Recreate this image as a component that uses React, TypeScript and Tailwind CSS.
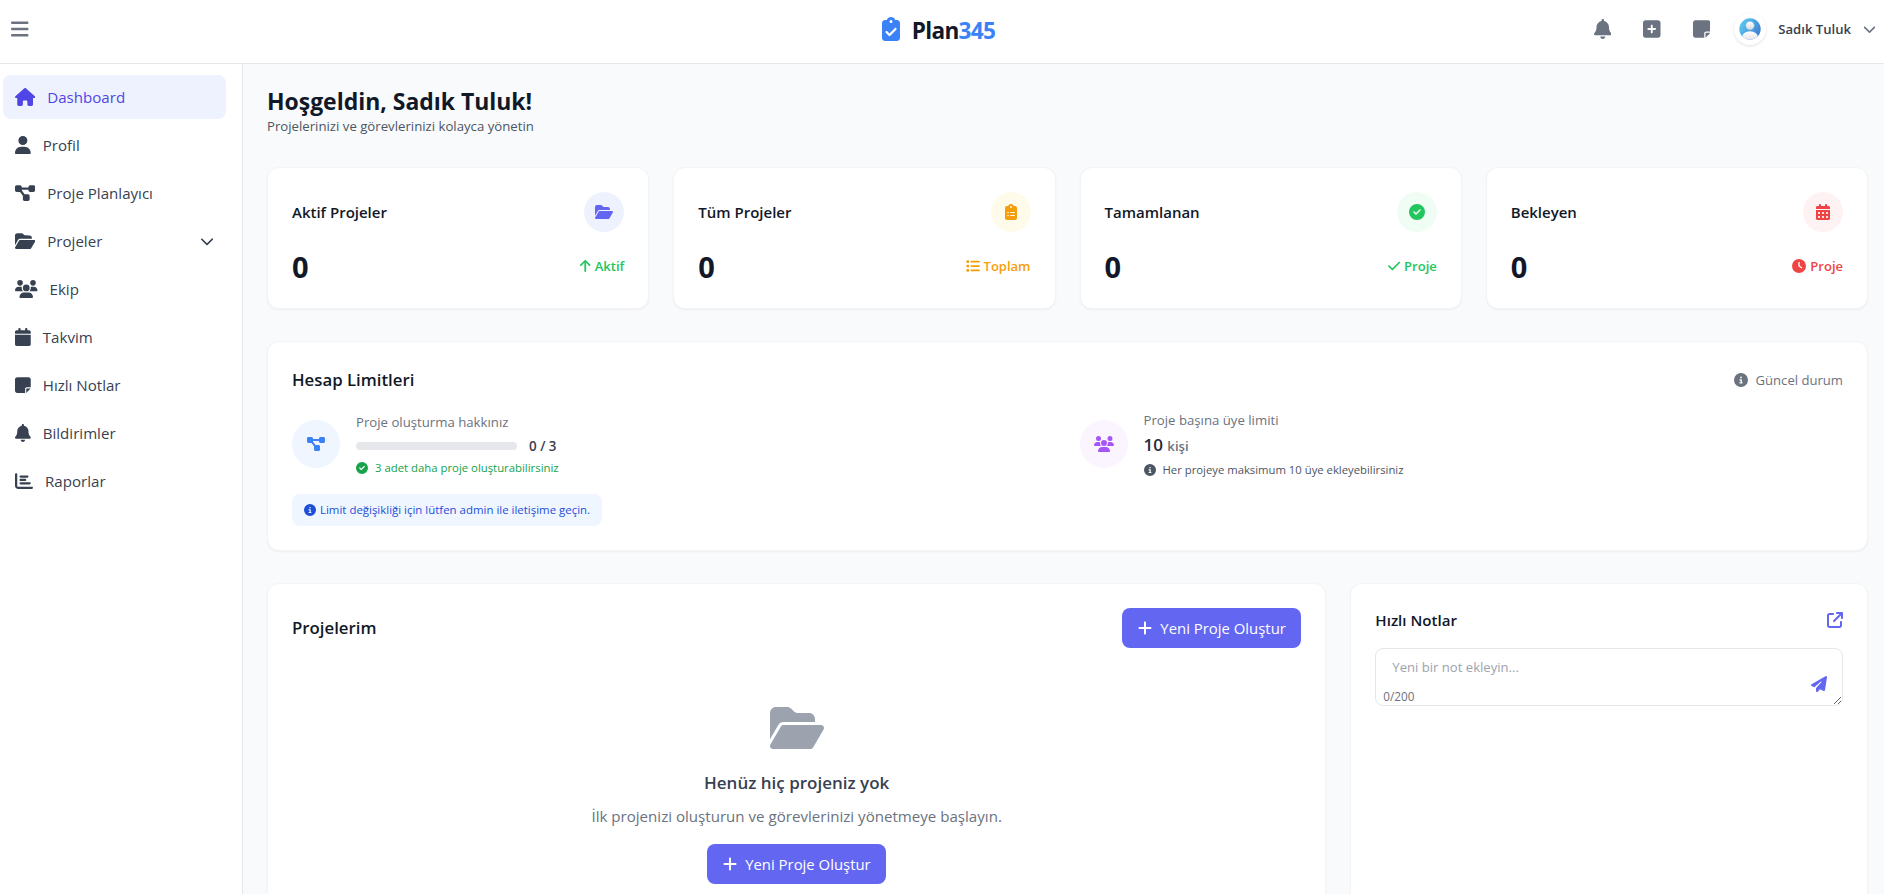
import type { ReactNode } from "react";
import type { IconType } from "react-icons";
import {
  FaArrowUp,
  FaArrowUpRightFromSquare,
  FaBars,
  FaBell,
  FaCalendar,
  FaCalendarDays,
  FaChartBar,
  FaCheck,
  FaChevronDown,
  FaCircleCheck,
  FaCircleInfo,
  FaClipboardList,
  FaClock,
  FaDiagramProject,
  FaFolderOpen,
  FaHouse,
  FaList,
  FaNoteSticky,
  FaPaperPlane,
  FaPlus,
  FaSquarePlus,
  FaUser,
  FaUsers,
} from "react-icons/fa6";

type NavItem = { label: string; icon: IconType; size: string; active?: boolean; expandable?: boolean };

const NAV: NavItem[] = [
  { label: "Dashboard", icon: FaHouse, size: "w-[20.25px] h-[18px]", active: true },
  { label: "Profil", icon: FaUser, size: "w-[15.75px] h-[18px]" },
  { label: "Proje Planlayıcı", icon: FaDiagramProject, size: "w-[20.25px] h-[18px]" },
  { label: "Projeler", icon: FaFolderOpen, size: "w-[20.25px] h-[18px]", expandable: true },
  { label: "Ekip", icon: FaUsers, size: "w-[22.5px] h-[18px]" },
  { label: "Takvim", icon: FaCalendar, size: "w-[15.75px] h-[18px]" },
  { label: "Hızlı Notlar", icon: FaNoteSticky, size: "w-[15.75px] h-[18px]" },
  { label: "Bildirimler", icon: FaBell, size: "w-[15.75px] h-[18px]" },
  { label: "Raporlar", icon: FaChartBar, size: "w-[18px] h-[18px]" },
];

type Stat = {
  title: string;
  value: number;
  icon: IconType;
  iconSize: string;
  circle: string;
  note: string;
  noteIcon: IconType;
  noteSize: string;
  noteColor: string;
};

const STATS: Stat[] = [
  {
    title: "Aktif Projeler", value: 0, icon: FaFolderOpen, iconSize: "w-[18px] h-4",
    circle: "bg-[#eef2ff] text-[#6366f1]",
    note: "Aktif", noteIcon: FaArrowUp, noteSize: "w-[10.5px] h-3.5", noteColor: "text-[#22c55e]",
  },
  {
    title: "Tüm Projeler", value: 0, icon: FaClipboardList, iconSize: "w-3 h-4",
    circle: "bg-[#fffbeb] text-[#f59e0b]",
    note: "Toplam", noteIcon: FaList, noteSize: "w-3.5 h-3.5", noteColor: "text-[#f59e0b]",
  },
  {
    title: "Tamamlanan", value: 0, icon: FaCircleCheck, iconSize: "w-4 h-4",
    circle: "bg-[#f0fdf4] text-[#22c55e]",
    note: "Proje", noteIcon: FaCheck, noteSize: "w-[12.25px] h-3.5", noteColor: "text-[#22c55e]",
  },
  {
    title: "Bekleyen", value: 0, icon: FaCalendarDays, iconSize: "w-3.5 h-4",
    circle: "bg-[#fef2f2] text-[#ef4444]",
    note: "Proje", noteIcon: FaClock, noteSize: "w-3.5 h-3.5", noteColor: "text-[#ef4444]",
  },
];

function Card({ className = "", children }: { className?: string; children: ReactNode }) {
  return (
    <div className={`rounded-xl border border-[#f3f4f6] bg-white p-6 shadow-[0_1px_2px_0_rgba(0,0,0,0.05)] ${className}`}>
      {children}
    </div>
  );
}

function ClipboardCheck() {
  return (
    <svg viewBox="0 0 384 512" className="h-6 w-[18px] text-[#3b82f6]" fill="currentColor">
      <path
        fillRule="evenodd"
        d="M192 0c-41.8 0-77.4 26.7-90.5 64H64C28.7 64 0 92.7 0 128v320c0 35.3 28.7 64 64 64h256c35.3 0 64-28.7 64-64V128c0-35.3-28.7-64-64-64h-37.5C269.4 26.7 233.8 0 192 0zm0 64a32 32 0 1 1 0 64 32 32 0 1 1 0-64zM305 273L177 401c-9.4 9.4-24.6 9.4-33.9 0L79 337c-9.4-9.4-9.4-24.6 0-33.9s24.6-9.4 33.9 0l47 47L271 239c9.4-9.4 24.6-9.4 33.9 0s9.4 24.6 0 33.9z"
      />
    </svg>
  );
}

function Avatar() {
  return (
    <div className="flex h-8 w-8 items-center justify-center rounded-full bg-white shadow-[0_1px_3px_0_rgba(0,0,0,0.12)]">
      <svg viewBox="0 0 22 22" className="h-[22px] w-[22px]">
        <defs>
          <linearGradient id="sky" x1="0" y1="0.2" x2="1" y2="0.8">
            <stop offset="0" stopColor="#5ccdf2" />
            <stop offset="1" stopColor="#3f78d2" />
          </linearGradient>
          <linearGradient id="body" x1="0" y1="0" x2="0" y2="1">
            <stop offset="0" stopColor="#ffffff" />
            <stop offset="1" stopColor="#d9d9dc" />
          </linearGradient>
          <clipPath id="disc">
            <circle cx="11" cy="11" r="10.7" />
          </clipPath>
        </defs>
        <g clipPath="url(#disc)">
          <rect width="22" height="22" fill="url(#sky)" />
          <ellipse cx="11" cy="19.5" rx="8" ry="6.2" fill="url(#body)" />
          <circle cx="11" cy="7.6" r="4.4" fill="url(#body)" stroke="#4fa9e0" strokeWidth="0.5" />
        </g>
      </svg>
    </div>
  );
}

function Header() {
  return (
    <header className="grid h-16 shrink-0 grid-cols-3 items-center border-b border-[#e5e7eb] bg-white pr-[8px] pl-[11px]">
      <div className="pb-1.5">
        <FaBars className="h-5 w-[17.5px] text-[#6b7280]" />
      </div>
      <div className="flex items-center justify-center gap-3 pr-2.5 pb-1.5">
        <ClipboardCheck />
        <span className="pt-1 text-[22.6px] leading-8 font-bold tracking-[-0.03em] text-[#111827]">
          Plan<span className="text-[#3b82f6]">345</span>
        </span>
      </div>
      <div className="flex items-center justify-end pb-1.5 text-[#6b7280]">
        <FaBell className="mr-8 h-5 w-[17.5px]" />
        <FaSquarePlus className="mr-8 h-5 w-[17.5px]" />
        <FaNoteSticky className="mr-6 h-5 w-[17.5px]" />
        <Avatar />
        <span className="mr-3 ml-3 text-[13.1px] leading-5 font-semibold text-[#374151]">Sadık Tuluk</span>
        <FaChevronDown className="h-3.5 w-[13px]" />
      </div>
    </header>
  );
}

function Sidebar() {
  return (
    <aside className="w-[243px] shrink-0 border-r border-[#e5e7eb] bg-white pt-[11px] pr-4 pl-[3px]">
      <nav className="flex flex-col gap-1">
        {NAV.map(({ label, icon: Icon, size, active, expandable }) => (
          <a
            key={label}
            className={`flex h-11 items-center rounded-lg px-3 ${active ? "bg-[#eef2ff] text-[#4f46e5]" : "text-[#374151]"}`}
          >
            <Icon className={`mr-3 ${size}`} />
            <span className="flex-1 text-[15.1px] leading-6">{label}</span>
            {expandable && <FaChevronDown className="h-3.5 w-3.5" />}
          </a>
        ))}
      </nav>
    </aside>
  );
}

function StatCard({ s }: { s: Stat }) {
  const Icon = s.icon;
  const NoteIcon = s.noteIcon;
  return (
    <Card>
      <div className="mb-4 flex items-center justify-between">
        <h3 className="text-[15px] leading-6 font-semibold text-[#111827]">{s.title}</h3>
        <div className={`flex h-10 w-10 items-center justify-center rounded-full ${s.circle}`}>
          <Icon className={s.iconSize} />
        </div>
      </div>
      <div className="flex items-center justify-between">
        <p className="pt-px text-[29px] leading-[35px] font-bold text-[#111827]">{s.value}</p>
        <p className={`flex items-center gap-1 text-[13px] leading-5 font-semibold ${s.noteColor}`}>
          <NoteIcon className={s.noteSize} />
          {s.note}
        </p>
      </div>
    </Card>
  );
}

function Limits() {
  return (
    <Card>
      <div className="mb-4 flex items-center justify-between">
        <h3 className="text-[16.8px] leading-7 font-semibold text-[#111827]">Hesap Limitleri</h3>
        <p className="flex items-center gap-2 text-[13.1px] leading-5 text-[#6b7280]">
          <FaCircleInfo className="h-3.5 w-3.5" />
          Güncel durum
        </p>
      </div>
      <div className="grid h-[68px] grid-cols-2 gap-6">
        <div className="flex items-center gap-4">
          <div className="flex h-12 w-12 items-center justify-center rounded-full bg-[#eff6ff] text-[#3b82f6]">
            <FaDiagramProject className="h-4 w-[18px]" />
          </div>
          <div className="flex flex-col gap-1">
            <p className="text-[13.2px] leading-5 text-[#6b7280]">Proje oluşturma hakkınız</p>
            <div className="flex items-center gap-3">
              <div className="h-2 w-[161px] rounded-full bg-[#e5e7eb]" />
              <span className="text-[13.4px] leading-5 font-semibold text-[#374151]">0 / 3</span>
            </div>
            <p className="flex items-center gap-[7px] text-[11.35px] leading-4 text-[#16a34a]">
              <FaCircleCheck className="h-3 w-3" />
              3 adet daha proje oluşturabilirsiniz
            </p>
          </div>
        </div>
        <div className="flex items-center gap-4">
          <div className="flex h-12 w-12 items-center justify-center rounded-full bg-[#faf5ff] text-[#a855f7]">
            <FaUsers className="h-4 w-5" />
          </div>
          <div>
            <p className="text-[13.2px] leading-5 text-[#6b7280]">Proje başına üye limiti</p>
            <p className="pt-0.5 text-[17px] leading-[26px] font-semibold text-[#1f2937]">
              10 <span className="text-[13.2px] leading-none text-[#6b7280]">kişi</span>
            </p>
            <p className="mt-1 flex items-center gap-[7px] text-[11.3px] leading-4 text-[#4b5563]">
              <FaCircleInfo className="h-3 w-3" />
              Her projeye maksimum 10 üye ekleyebilirsiniz
            </p>
          </div>
        </div>
      </div>
      <div className="mt-4 inline-flex h-8 items-center gap-1 rounded-lg bg-[#eff6ff] px-3 align-top text-[11.45px] leading-4 text-[#1d4ed8]">
        <FaCircleInfo className="h-3 w-3" />
        Limit değişikliği için lütfen admin ile iletişime geçin.
      </div>
    </Card>
  );
}

function NewProjectButton() {
  return (
    <button className="flex h-10 w-[179px] items-center gap-2 rounded-lg bg-[#6366f1] px-4 text-[14.9px] leading-6 whitespace-nowrap text-white">
      <FaPlus className="h-4 w-3.5 shrink-0" />
      Yeni Proje Oluştur
    </button>
  );
}

function Projects() {
  return (
    <Card className="col-span-2">
      <div className="mb-6 flex items-center justify-between">
        <h3 className="text-[16.8px] leading-7 font-semibold text-[#111827]">Projelerim</h3>
        <NewProjectButton />
      </div>
      <div className="flex flex-col items-center py-8">
        <FaFolderOpen className="mb-4 h-12 w-[54px] text-[#9ca3af]" />
        <h4 className="mb-2 pt-px text-[17px] leading-[27px] font-semibold text-[#374151]">Henüz hiç projeniz yok</h4>
        <p className="mb-4 text-[15.1px] leading-6 text-[#6b7280]">
          İlk projenizi oluşturun ve görevlerinizi yönetmeye başlayın.
        </p>
        <NewProjectButton />
      </div>
    </Card>
  );
}

function Notes() {
  return (
    <Card>
      <div className="mb-4 flex items-center justify-between">
        <h3 className="text-[15.1px] leading-6 font-semibold text-[#111827]">Hızlı Notlar</h3>
        <FaArrowUpRightFromSquare className="h-4 w-4 text-[#6366f1]" />
      </div>
      <div className="relative">
        <textarea
          placeholder="Yeni bir not ekleyin..."
          className="block h-[58px] w-full resize-y overflow-hidden rounded-lg border border-[#e5e7eb] bg-white py-2 pr-12 pl-4 text-[13.1px] leading-5 placeholder:text-[#9ca3af]"
        />
        <span className="absolute bottom-0.5 left-2 text-[11.7px] leading-4 text-[#6b7280]">0/200</span>
        <FaPaperPlane className="absolute right-4 bottom-3.5 h-4 w-4 text-[#6366f1]" />
      </div>
    </Card>
  );
}

export default function App() {
  return (
    <div className="flex h-[894px] flex-col overflow-hidden bg-[#f9fafb] font-['Open_Sans','Noto_Sans',sans-serif]">
      <Header />
      <div className="flex min-h-0 flex-1">
        <Sidebar />
        <main className="min-w-0 flex-1 overflow-hidden pt-[21px] pr-4 pl-6">
          <div className="mb-8">
            <h1 className="text-[22.95px] leading-8 font-bold text-[#111827]">Hoşgeldin, Sadık Tuluk!</h1>
            <p className="text-[13.2px] leading-[18px] text-[#4b5563]">Projelerinizi ve görevlerinizi kolayca yönetin</p>
          </div>
          <div className="mb-8 grid grid-cols-4 gap-6">
            {STATS.map((s) => (
              <StatCard key={s.title} s={s} />
            ))}
          </div>
          <div className="mb-8">
            <Limits />
          </div>
          <div className="grid grid-cols-3 gap-6">
            <Projects />
            <Notes />
          </div>
        </main>
      </div>
    </div>
  );
}
